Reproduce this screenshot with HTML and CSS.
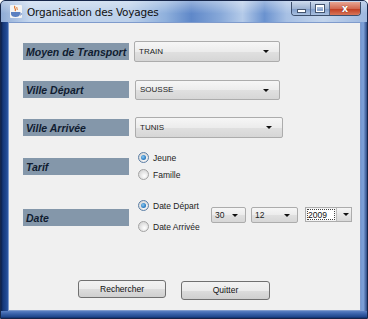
FILE: index.html
```html
<html>
<head>
	<meta charset="UTF-8">
	<link rel="stylesheet" href="styles.css">
</head>
<body>
	<div class="window">
		<div class="titlebar">
			<svg class="app-icon" viewBox="0 0 12 13" width="12" height="13">
				<path d="M5 1 C3 3 7 4 5 6" stroke="#e07020" stroke-width="1.2" fill="none"/>
				<path d="M7 2 C6 3 8 4 7 5" stroke="#e07020" stroke-width="1" fill="none"/>
				<path d="M1 7 H10 V9 C10 11 8 12 5.5 12 C3 12 1 11 1 9 Z" fill="#5a7fc0"/>
				<path d="M10 8 C12 8 12 10 10 10" stroke="#5a7fc0" stroke-width="1" fill="none"/>
			</svg>
			<span class="title">Organisation des Voyages</span>
			<div class="controls">
				<span class="ctl ctl-min"><i></i></span>
				<span class="ctl ctl-max"><i></i></span>
				<span class="ctl ctl-close">x</span>
			</div>
		</div>

		<div class="content">
			<div class="row row-transport">
				<div class="label">Moyen de Transport</div>
				<div class="combo combo-transport">TRAIN<b></b></div>
			</div>
			<div class="row row-depart">
				<div class="label">Ville Départ</div>
				<div class="combo combo-depart">SOUSSE<b></b></div>
			</div>
			<div class="row row-arrivee">
				<div class="label">Ville Arrivée</div>
				<div class="combo combo-arrivee">TUNIS<b></b></div>
			</div>
			<div class="row row-tarif">
				<div class="label">Tarif</div>
				<div class="radios">
					<div class="radio checked"><span class="dot"></span>Jeune</div>
					<div class="radio"><span class="dot"></span>Famille</div>
				</div>
			</div>
			<div class="row row-date">
				<div class="label">Date</div>
				<div class="radios radios-date">
					<div class="radio checked"><span class="dot"></span>Date Départ</div>
					<div class="radio"><span class="dot"></span>Date Arrivée</div>
				</div>
				<div class="combo combo-small combo-day">30<b></b></div>
				<div class="combo combo-small combo-month">12<b></b></div>
				<div class="combo-year">
					<span class="year-field">2009</span>
					<span class="year-btn"><b></b></span>
				</div>
			</div>
			<div class="row row-buttons">
				<div class="button">Rechercher</div>
				<div class="button">Quitter</div>
			</div>
		</div>
	</div>
</body>
</html>
```

FILE: styles.css
```css
body {
	margin: 0;
	padding: 0;
	background-color: #ffffff;
	font-family: "Liberation Sans", Arial, sans-serif;
}

.window {
	width: 368px;
	height: 319px;
	box-sizing: border-box;
	padding: 0 6px 7px 7px;
	display: flex;
	flex-flow: column nowrap;
	background: linear-gradient(90deg, #0c1f4a 0px, #163878 2px, #1f468e 5px, #2f58a2 7px, #4d75bb 50%, #5f86c8 97%, #7fa1d8 99%, #2e4c88 100%);
	border: 1px solid #16264a;
	border-radius: 5px 5px 0 0;
	position: relative;
}

.window::after {
	content: "";
	position: absolute;
	left: 0;
	right: 0;
	bottom: 0;
	height: 7px;
	background: linear-gradient(180deg, #5a7fc2 0px, #3760a8 3px, #1f4689 6px, #10296a 7px);
}

.titlebar {
	height: 21px;
	margin: 0 -6px 0 -7px;
	padding: 0 6px 0 7px;
	display: flex;
	flex-flow: row nowrap;
	align-items: center;
	border-radius: 4px 4px 0 0;
	background:
		linear-gradient(180deg, rgba(255, 255, 255, 0.35) 0%, rgba(255, 255, 255, 0) 60%),
		linear-gradient(90deg, #8fabd6 0%, #c5d7ee 8%, #bcd0ea 35%, #8fb0dc 45%, #5f88c9 52%, #88a9d9 60%, #b5cbe9 66%, #6a92cf 72%, #a7c0e4 78%, #c2d4ec 88%, #9db7df 100%);
}

.app-icon {
	margin-left: 2px;
	margin-right: 5px;
	margin-top: -1px;
	background: #f4f4f4;
	border-radius: 1px;
}

.title {
	font-family: "DejaVu Sans", sans-serif;
	font-size: 10.5px;
	color: #111;
	letter-spacing: -0.2px;
}

.controls {
	margin-left: auto;
	display: flex;
	align-self: flex-start;
	margin-top: 1px;
	border: 1px solid #3d4f6c;
	border-top: none;
	border-radius: 0 0 4px 4px;
	overflow: hidden;
}

.ctl {
	height: 13px;
	width: 19px;
	display: flex;
	align-items: center;
	justify-content: center;
	background: linear-gradient(180deg, #c9d7ea 0%, #9fb5d4 50%, #7f9cc8 51%, #a9c0e0 100%);
	border-right: 1px solid #56698a;
	box-sizing: border-box;
}

.ctl-min i {
	width: 7px;
	height: 2px;
	margin-top: 5px;
	background: #fff;
	border: 1px solid #44556f;
}

.ctl-max i {
	width: 6px;
	height: 4px;
	border: 1px solid #fff;
	border-top-width: 2px;
	outline: 1px solid #44556f;
}

.ctl-close {
	width: 30px;
	border-right: none;
	background: linear-gradient(180deg, #e8a592 0%, #d36a52 50%, #c0391d 51%, #d7765a 100%);
	color: #fff;
	font-family: "DejaVu Sans", sans-serif;
	font-weight: bold;
	font-size: 10px;
	line-height: 13px;
	text-shadow: 0 0 1px #5b1a10;
}

.content {
	flex: 1;
	background-color: #f0f0f0;
	border: 1px solid #7f9bcc;
	padding-left: 14px;
	display: flex;
	flex-flow: column nowrap;
	position: relative;
	z-index: 1;
}

.row {
	display: flex;
	flex-flow: row nowrap;
	align-items: center;
}

.row-transport {
	margin-top: 17px;
	height: 22px;
}

.row-depart {
	margin-top: 17px;
	height: 21px;
}

.row-arrivee {
	margin-top: 16px;
	height: 22px;
}

.row-tarif {
	margin-top: 12px;
	height: 32px;
}

.row-date {
	margin-top: 16px;
	height: 38px;
}

.row-buttons {
	margin-top: 44px;
	padding-left: 55px;
	align-items: flex-start;
}

.label {
	width: 106px;
	height: 17px;
	box-sizing: border-box;
	padding-left: 3px;
	background-color: #8497aa;
	color: #101c30;
	font-weight: bold;
	font-style: italic;
	font-size: 10.5px;
	line-height: 18px;
	white-space: nowrap;
}

.combo {
	position: relative;
	height: 21px;
	box-sizing: border-box;
	padding-left: 4px;
	border: 1px solid #acacac;
	border-radius: 2px;
	background: linear-gradient(180deg, #f6f6f6 0%, #ececec 50%, #e0e0e0 51%, #d6d6d6 100%);
	color: #222;
	font-size: 8px;
	line-height: 19px;
}

.combo b {
	position: absolute;
	right: 10px;
	top: 8px;
	border-left: 3px solid transparent;
	border-right: 3px solid transparent;
	border-top: 3px solid #111;
}

.combo-transport {
	width: 146px;
	margin-left: 5px;
}

.combo-depart {
	width: 145px;
	margin-left: 6px;
	height: 20px;
	line-height: 18px;
}

.combo-arrivee {
	width: 148px;
	margin-left: 6px;
	height: 21px;
}

.radios {
	margin-left: 9px;
	display: flex;
	flex-flow: column nowrap;
	align-self: stretch;
	justify-content: space-between;
}

.radios-date {
	width: 73px;
	margin-top: -2px;
}

.radio {
	display: flex;
	align-items: center;
	height: 15px;
	font-size: 8.5px;
	color: #222;
	white-space: nowrap;
}

.radios-date .radio {
	height: 19px;
}

.dot {
	width: 11px;
	height: 11px;
	box-sizing: border-box;
	margin-right: 4px;
	border: 1px solid #a3a3a3;
	border-radius: 50%;
	background: radial-gradient(circle at 60% 65%, #ffffff 0%, #e4e4e4 50%, #cfcfcf 100%);
	display: flex;
	align-items: center;
	justify-content: center;
}

.radio.checked .dot {
	border-color: #5c7fa6;
}

.radio.checked .dot::after {
	content: "";
	width: 5px;
	height: 5px;
	border-radius: 50%;
	background: radial-gradient(circle at 40% 40%, #8ccaf2 0%, #2f7fc4 60%, #1a4f8a 100%);
}

.combo-small {
	height: 16px;
	line-height: 14px;
	margin-top: -4px;
	font-size: 8.5px;
	padding-left: 3px;
}

.combo-small b {
	top: 6px;
	right: 7px;
}

.combo-day {
	width: 35px;
}

.combo-month {
	width: 47px;
	margin-left: 5px;
}

.combo-year {
	margin-left: 7px;
	margin-top: -6px;
	width: 47px;
	height: 15px;
	display: flex;
	box-sizing: border-box;
	border: 1px solid #acacac;
	background: #f4f4f4;
}

.year-field {
	width: 28px;
	border: 1px dotted #444;
	margin: 1px;
	box-sizing: border-box;
	font-size: 8.5px;
	line-height: 11px;
	color: #111;
	background: #ffffff;
}

.year-btn {
	position: relative;
	flex: 1;
	border-left: 1px solid #bdbdbd;
	background: linear-gradient(180deg, #f6f6f6 0%, #e6e6e6 50%, #d8d8d8 100%);
}

.year-btn b {
	position: absolute;
	left: 6px;
	top: 5px;
	border-left: 3px solid transparent;
	border-right: 3px solid transparent;
	border-top: 3px solid #111;
}

.button {
	height: 18px;
	width: 88px;
	box-sizing: border-box;
	border: 1px solid #707070;
	border-radius: 3px;
	background: linear-gradient(180deg, #f2f2f2 0%, #ebebeb 50%, #dddddd 51%, #cfcfcf 100%);
	font-size: 8.5px;
	line-height: 16px;
	text-align: center;
	color: #111;
}

.button + .button {
	margin-left: 15px;
	margin-top: 1px;
	width: 89px;
	height: 19px;
	line-height: 17px;
}
```
